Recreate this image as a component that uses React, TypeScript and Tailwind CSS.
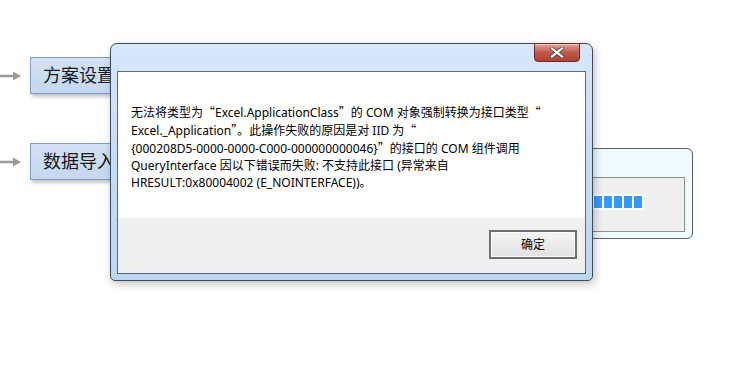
import React from "react";

const lines = [
  "无法将类型为“Excel.ApplicationClass”的 COM 对象强制转换为接口类型“",
  "Excel._Application”。此操作失败的原因是对 IID 为“",
  "{000208D5-0000-0000-C000-000000000046}”的接口的 COM 组件调用",
  "QueryInterface 因以下错误而失败: 不支持此接口 (异常来自",
  "HRESULT:0x80004002 (E_NOINTERFACE))。",
];

// chinese quotes should take a full-width cell like in the original font
function withQuotes(text: string) {
  return text.split(/([“”])/).map((part, i) =>
    part === "“" || part === "”" ? (
      <span key={i} style={{ fontFamily: '"Noto Sans CJK SC", sans-serif' }}>
        {part}
      </span>
    ) : (
      part
    ),
  );
}

function Arrow() {
  return (
    <svg width="22" height="12" viewBox="0 0 22 12" className="shrink-0">
      <path d="M0 6 H15" stroke="#9a9a9a" strokeWidth="2.5" />
      <path d="M13 1.5 L21 6 L13 10.5 Z" fill="#9a9a9a" />
    </svg>
  );
}

function StepBox({ label }: { label: string }) {
  return (
    <div className="flex items-center gap-[8px]">
      <Arrow />
      <div className="flex h-[37px] w-[110px] items-center border border-[#7d9fc6] bg-gradient-to-b from-[#d3e2f4] to-[#c3d7ef] pl-[12px] text-[18px] text-[#1a1a1a] shadow-[2px_3px_3px_rgba(0,0,0,0.22)]">
        {label}
      </div>
    </div>
  );
}

function CloseButton() {
  return (
    <div className="absolute right-[6px] top-[-1px] flex h-[19px] w-[46px] items-center justify-center rounded-b-[4px] border border-[#6b2c24] bg-gradient-to-b from-[#e4a698] via-[#c2584b] to-[#ad3f33] shadow-[inset_0_1px_0_rgba(255,255,255,0.45)]">
      <svg width="14" height="11" viewBox="0 0 14 11">
        <path
          d="M2 1.5 L12 9.5 M12 1.5 L2 9.5"
          stroke="#5a4a48"
          strokeWidth="4"
          strokeLinecap="square"
        />
        <path
          d="M2 1.5 L12 9.5 M12 1.5 L2 9.5"
          stroke="#ffffff"
          strokeWidth="2.2"
          strokeLinecap="square"
        />
      </svg>
    </div>
  );
}

export default function App() {
  return (
    <div
      className="relative h-[388px] w-[745px] overflow-hidden bg-white"
      style={{ fontFamily: '"Noto Sans", "Noto Sans CJK SC", sans-serif' }}
    >
      <div className="flex flex-col gap-[49px] pt-[57px]">
        <StepBox label="方案设置" />
        <StepBox label="数据导入" />
      </div>

      {/* progress window behind */}
      <div className="absolute left-[400px] top-[148px] flex h-[91px] w-[293px] flex-col rounded-[6px] border border-[#5c5f63] bg-[#effbff] pb-[6px] pl-[6px] pr-[7px] pt-[28px]">
        <div className="flex flex-1 items-start justify-end border border-[#8e8e8e] bg-[#f0f0f0] pr-[40px] pt-[16px]">
          <div className="flex h-[16px] w-[200px] justify-end gap-[2px] border-2 border-white bg-white">
            {Array.from({ length: 20 }).map((_, i) => (
              <div key={i} className="h-full w-[8px] shrink-0 bg-[#3399ff]" />
            ))}
          </div>
        </div>
      </div>

      {/* error dialog */}
      <div className="absolute left-[110px] top-[43px] flex h-[238px] w-[483px] flex-col rounded-t-[7px] rounded-b-[5px] border border-[#3e4a58] bg-gradient-to-b from-[#d6e8fa] via-[#c4dcf6] to-[#bcd7f5] px-[6px] pb-[6px] shadow-[2px_3px_8px_rgba(0,0,0,0.25)]">
        <div className="relative h-[27px] shrink-0">
          <CloseButton />
        </div>
        <div className="flex flex-1 flex-col border border-[#5d6b7a] bg-white">
          <div className="h-[146px] pl-[13px] pt-[31px] text-[12px] leading-[17px] text-black">
            {lines.map((l) => (
              <div key={l} className="whitespace-nowrap">
                {withQuotes(l)}
              </div>
            ))}
          </div>
          <div className="flex flex-1 items-start justify-end bg-[#f0f0f0] pr-[8px] pt-[12px]">
            <button className="flex h-[29px] w-[88px] items-center justify-center border-2 border-[#6f6f6f] bg-gradient-to-b from-[#f4f4f4] to-[#e2e2e2] text-[12px] text-black shadow-[inset_0_0_0_1px_#fcfcfc]">
              确定
            </button>
          </div>
        </div>
      </div>
    </div>
  );
}
